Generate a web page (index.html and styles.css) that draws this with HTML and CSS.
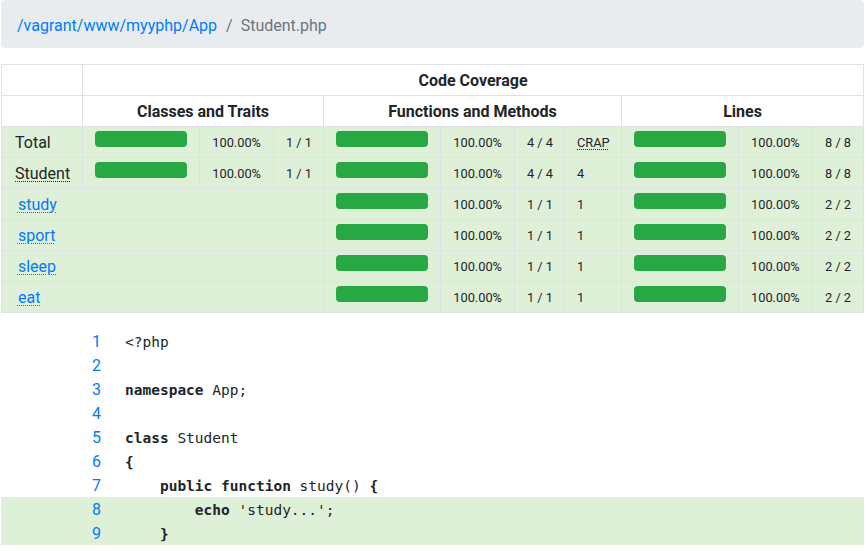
FILE: index.html
```html
<!DOCTYPE html>
<html>
<head>
<meta charset="utf-8">
<title>Code Coverage for Student.php</title>
<link rel="stylesheet" href="styles.css">
</head>
<body>
<div class="wrap">
  <nav class="crumbs">
    <a class="crumb-link" href="#">/vagrant/www/myyphp/App</a>
    <span class="crumb-sep">/</span>
    <span class="crumb-active">Student.php</span>
  </nav>

  <table class="cov">
    <colgroup>
      <col class="c-name">
      <col class="c-bar"><col class="c-pct"><col class="c-cnt">
      <col class="c-bar"><col class="c-pct"><col class="c-cnt"><col class="c-crap">
      <col class="c-bar"><col class="c-pct2"><col class="c-cnt2">
    </colgroup>
    <thead>
      <tr>
        <th></th>
        <th colspan="10">Code Coverage</th>
      </tr>
      <tr>
        <th></th>
        <th colspan="3">Classes and Traits</th>
        <th colspan="4">Functions and Methods</th>
        <th colspan="3">Lines</th>
      </tr>
    </thead>
    <tbody>
      <tr class="ok">
        <td class="name">Total</td>
        <td class="bar"><div class="progress"><div class="fill" style="width:100%"></div></div></td>
        <td class="sm num">100.00%</td>
        <td class="sm num">1&nbsp;/&nbsp;1</td>
        <td class="bar"><div class="progress"><div class="fill" style="width:100%"></div></div></td>
        <td class="sm num">100.00%</td>
        <td class="sm num">4&nbsp;/&nbsp;4</td>
        <td class="sm"><abbr class="dot">CRAP</abbr></td>
        <td class="bar"><div class="progress"><div class="fill" style="width:100%"></div></div></td>
        <td class="sm num">100.00%</td>
        <td class="sm num">8&nbsp;/&nbsp;8</td>
      </tr>
      <tr class="ok">
        <td class="name"><abbr class="dot">Student</abbr></td>
        <td class="bar"><div class="progress"><div class="fill" style="width:100%"></div></div></td>
        <td class="sm num">100.00%</td>
        <td class="sm num">1&nbsp;/&nbsp;1</td>
        <td class="bar"><div class="progress"><div class="fill" style="width:100%"></div></div></td>
        <td class="sm num">100.00%</td>
        <td class="sm num">4&nbsp;/&nbsp;4</td>
        <td class="sm">4</td>
        <td class="bar"><div class="progress"><div class="fill" style="width:100%"></div></div></td>
        <td class="sm num">100.00%</td>
        <td class="sm num">8&nbsp;/&nbsp;8</td>
      </tr>
      <tr class="ok">
        <td class="name meth" colspan="4">&nbsp;<a class="method" href="#7">study</a></td>
        <td class="bar"><div class="progress"><div class="fill" style="width:100%"></div></div></td>
        <td class="sm num">100.00%</td>
        <td class="sm num">1&nbsp;/&nbsp;1</td>
        <td class="sm">1</td>
        <td class="bar"><div class="progress"><div class="fill" style="width:100%"></div></div></td>
        <td class="sm num">100.00%</td>
        <td class="sm num">2&nbsp;/&nbsp;2</td>
      </tr>
      <tr class="ok">
        <td class="name meth" colspan="4">&nbsp;<a class="method" href="#11">sport</a></td>
        <td class="bar"><div class="progress"><div class="fill" style="width:100%"></div></div></td>
        <td class="sm num">100.00%</td>
        <td class="sm num">1&nbsp;/&nbsp;1</td>
        <td class="sm">1</td>
        <td class="bar"><div class="progress"><div class="fill" style="width:100%"></div></div></td>
        <td class="sm num">100.00%</td>
        <td class="sm num">2&nbsp;/&nbsp;2</td>
      </tr>
      <tr class="ok">
        <td class="name meth" colspan="4">&nbsp;<a class="method" href="#15">sleep</a></td>
        <td class="bar"><div class="progress"><div class="fill" style="width:100%"></div></div></td>
        <td class="sm num">100.00%</td>
        <td class="sm num">1&nbsp;/&nbsp;1</td>
        <td class="sm">1</td>
        <td class="bar"><div class="progress"><div class="fill" style="width:100%"></div></div></td>
        <td class="sm num">100.00%</td>
        <td class="sm num">2&nbsp;/&nbsp;2</td>
      </tr>
      <tr class="ok">
        <td class="name meth" colspan="4">&nbsp;<a class="method" href="#19">eat</a></td>
        <td class="bar"><div class="progress"><div class="fill" style="width:100%"></div></div></td>
        <td class="sm num">100.00%</td>
        <td class="sm num">1&nbsp;/&nbsp;1</td>
        <td class="sm">1</td>
        <td class="bar"><div class="progress"><div class="fill" style="width:100%"></div></div></td>
        <td class="sm num">100.00%</td>
        <td class="sm num">2&nbsp;/&nbsp;2</td>
      </tr>
    </tbody>
  </table>

  <table class="code">
    <tbody>
      <tr><td class="ln"><a href="#1">1</a></td><td class="src">&lt;?php</td></tr>
      <tr><td class="ln"><a href="#2">2</a></td><td class="src"></td></tr>
      <tr><td class="ln"><a href="#3">3</a></td><td class="src"><span class="kw">namespace</span> App;</td></tr>
      <tr><td class="ln"><a href="#4">4</a></td><td class="src"></td></tr>
      <tr><td class="ln"><a href="#5">5</a></td><td class="src"><span class="kw">class</span> Student</td></tr>
      <tr><td class="ln"><a href="#6">6</a></td><td class="src"><span class="kw">{</span></td></tr>
      <tr><td class="ln"><a href="#7">7</a></td><td class="src">    <span class="kw">public</span> <span class="kw">function</span> study() <span class="kw">{</span></td></tr>
      <tr class="covered"><td class="ln"><a href="#8">8</a></td><td class="src">        <span class="kw">echo</span> 'study...';</td></tr>
      <tr class="covered"><td class="ln"><a href="#9">9</a></td><td class="src">    <span class="kw">}</span></td></tr>
    </tbody>
  </table>
</div>
</body>
</html>
```
FILE: styles.css
```css
html, body {
  margin: 0;
  padding: 0;
  background: #fff;
}
body {
  font-family: Roboto, "Noto Sans", sans-serif;
  font-size: 16px;
  line-height: 1.5;
  color: #212529;
}
.wrap {
  width: 863px;
  padding-left: 1px;
}
a {
  color: #007bff;
  text-decoration: none;
}

/* breadcrumb */
.crumbs {
  display: flex;
  align-items: center;
  height: 48px;
  box-sizing: border-box;
  padding: 14px 16px 10px;
  background: #e9ecef;
  border-radius: 4px;
  margin-bottom: 16px;
}
.crumb-sep {
  color: #6c757d;
  padding: 0 8px 0 9px;
}
.crumb-active {
  color: #6c757d;
}

/* coverage table */
.cov {
  width: 863px;
  table-layout: fixed;
  border-collapse: collapse;
  margin-bottom: 16px;
}
.c-name { width: 81px; }
.c-bar { width: 117px; }
.c-pct { width: 74px; }
.c-cnt { width: 50px; }
.c-crap { width: 57px; }
.c-pct2 { width: 73px; }
.c-cnt2 { width: 52px; }

.cov th,
.cov td {
  border: 1px solid #dee2e6;
  padding: 5px 12px 3px;
  height: 22px;
  line-height: 22px;
  vertical-align: top;
  white-space: nowrap;
}
.cov th {
  font-weight: 700;
  text-align: center;
}
.cov td.bar {
  padding: 4px 12px;
}
.cov tr.ok td {
  background: #dff0d8;
}
.cov td.sm {
  font-size: 12.8px;
}
.cov td.num {
  text-align: right;
}
.cov td.name {
  padding-left: 13px;
}
.cov td.meth {
  padding-left: 12px;
}
.dot {
  text-decoration: underline dotted;
  text-decoration-thickness: 1px;
  text-underline-offset: 2px;
  cursor: help;
}
.method {
  text-decoration: underline dotted;
  text-decoration-thickness: 1px;
  text-underline-offset: 2px;
}
.progress {
  height: 16px;
  background: #e9ecef;
  border-radius: 4px;
  overflow: hidden;
  display: flex;
}
.fill {
  background: #28a745;
  height: 100%;
}

/* source listing */
.code {
  width: 863px;
  border-collapse: collapse;
}
.code td {
  padding: 2px 12px 0;
  height: 22px;
  line-height: 22px;
  vertical-align: top;
}
.code td.ln {
  width: 88px;
  text-align: right;
}
.code td.src {
  font-family: "DejaVu Sans Mono", "Liberation Mono", monospace;
  font-size: 14.5px;
  white-space: pre;
  color: #212529;
}
.code .kw {
  font-weight: 700;
}
.code tr.covered td {
  background: #dff0d8;
}
```
